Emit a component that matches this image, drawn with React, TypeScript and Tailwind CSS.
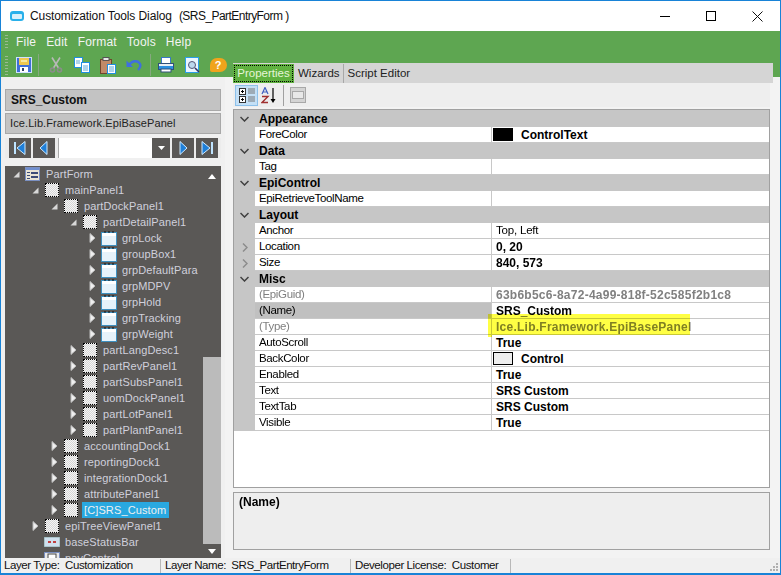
const font = "font-['Liberation_Sans',sans-serif]";

function TreeIcon({ kind }: { kind: string }) {
  if (kind === 'form')
    return (
      <svg width="16" height="15" viewBox="0 0 16 15" className="shrink-0">
        <rect x="0.5" y="0.5" width="14" height="13" fill="#e8e4d4" stroke="#7a8fc0" />
        <rect x="1" y="1" width="13" height="2" fill="#6f8fd0" />
        <path d="M2 5h3v1H2zM2 8h3v1H2zM2 11h3v1H2zM6 5h7v2H6zM6 9h7v2H6z" fill="#3c4c78" />
      </svg>
    );
  if (kind === 'group')
    return (
      <svg width="16" height="15" viewBox="0 0 16 15" className="shrink-0">
        <rect x="0.5" y="1.5" width="15" height="13" fill="#e6f2fa" stroke="#3d8fbf" />
        <path d="M1 2h14v3H1z" fill="#ffffff" />
        <path d="M3 1h2M7 1h2M11 1h2" stroke="#111" />
      </svg>
    );
  if (kind === 'bar')
    return (
      <svg width="16" height="10" viewBox="0 0 16 10" className="shrink-0">
        <rect x="0" y="0" width="16" height="10" fill="#cfe0ee" stroke="#8aa" />
        <rect x="4" y="4" width="3" height="2" fill="#c04040" />
        <rect x="9" y="4" width="3" height="2" fill="#c04040" />
      </svg>
    );
  if (kind === 'nav')
    return (
      <svg width="16" height="12" viewBox="0 0 16 12" className="shrink-0">
        <rect x="0.5" y="0.5" width="15" height="11" fill="#e8e8e8" stroke="#7a8fc0" />
        <rect x="4" y="2" width="8" height="6" fill="#fff" stroke="#444" />
      </svg>
    );
  return (
    <span className="h-[14px] w-[14px] shrink-0 border border-dotted border-black bg-[repeating-conic-gradient(#d8d8d8_0_25%,#f4f4f4_0_50%)] bg-[length:2px_2px]" />
  );
}

function Caret({ open }: { open: boolean }) {
  return open ? (
    <svg width="7" height="7" viewBox="0 0 7 7" className="shrink-0">
      <path d="M6.5 0.5V6.5H0.5Z" fill="#d8d8d8" />
    </svg>
  ) : (
    <svg width="7" height="10" viewBox="0 0 7 10" className="shrink-0">
      <path d="M1 0.5L6 5L1 9.5Z" fill="#f0f0f0" stroke="#bbb" />
    </svg>
  );
}

const tree: [string, number, string, boolean | null, boolean?][] = [
  ['PartForm', 0, 'form', true],
  ['mainPanel1', 1, 'panel', true],
  ['partDockPanel1', 2, 'panel', true],
  ['partDetailPanel1', 3, 'panel', true],
  ['grpLock', 4, 'group', false],
  ['groupBox1', 4, 'group', false],
  ['grpDefaultPara', 4, 'group', false],
  ['grpMDPV', 4, 'group', false],
  ['grpHold', 4, 'group', false],
  ['grpTracking', 4, 'group', false],
  ['grpWeight', 4, 'group', false],
  ['partLangDesc1', 3, 'panel', false],
  ['partRevPanel1', 3, 'panel', false],
  ['partSubsPanel1', 3, 'panel', false],
  ['uomDockPanel1', 3, 'panel', false],
  ['partLotPanel1', 3, 'panel', false],
  ['partPlantPanel1', 3, 'panel', false],
  ['accountingDock1', 2, 'panel', false],
  ['reportingDock1', 2, 'panel', false],
  ['integrationDock1', 2, 'panel', false],
  ['attributePanel1', 2, 'panel', false],
  ['[C]SRS_Custom', 2, 'panel', false, true],
  ['epiTreeViewPanel1', 1, 'panel', false],
  ['baseStatusBar', 1, 'bar', null],
  ['navControl', 1, 'nav', null],
];

const indent: Record<number, string> = { 0: 'pl-[8px]', 1: 'pl-[27px]', 2: 'pl-[46px]', 3: 'pl-[65px]', 4: 'pl-[84px]' };

function TreeRow({ row }: { row: (typeof tree)[number] }) {
  const [label, depth, kind, open, selected] = row;
  return (
    <div className={`flex h-[16px] shrink-0 items-center ${indent[depth]}`}>
      <span className="flex w-[12px] shrink-0 items-center">{open !== null && <Caret open={open} />}</span>
      <span className="flex w-[16px] shrink-0 items-center justify-center">
        <TreeIcon kind={kind} />
      </span>
      <span className={`ml-[3px] whitespace-nowrap pl-[2px] pr-[3px] text-[11px] leading-[16px] tracking-[0.12px] ${selected ? 'bg-[#29a8e0] text-[#f0f0f0]' : 'text-[#d0d0dc]'}`}>
        {label}
      </span>
    </div>
  );
}

function NavButton({ dir, bar }: { dir: 'l' | 'r'; bar?: boolean }) {
  return (
    <span className="flex h-[20px] w-[22px] items-center justify-center bg-[#5a5856]">
      <svg width="14" height="14" viewBox="0 0 14 14">
        {dir === 'l' ? (
          <>
            {bar && <rect x="1" y="1" width="2" height="12" fill="#bfe4ff" />}
            <path d={bar ? 'M12 0.5L4 7L12 13.5Z' : 'M10 0.5L3 7L10 13.5Z'} fill="#1f7fd8" stroke="#cfeaff" />
          </>
        ) : (
          <>
            {bar && <rect x="11" y="1" width="2" height="12" fill="#bfe4ff" />}
            <path d={bar ? 'M2 0.5L10 7L2 13.5Z' : 'M4 0.5L11 7L4 13.5Z'} fill="#1f7fd8" stroke="#cfeaff" />
          </>
        )}
      </svg>
    </span>
  );
}

function Grip({ h }: { h: string }) {
  return <span className={`w-[3px] ${h} shrink-0 bg-[repeating-linear-gradient(to_bottom,#9aba92_0_1px,transparent_1px_3px)]`} />;
}

function Tool({ children, w = 'w-[22px]' }: { children: React.ReactNode; w?: string }) {
  return <span className={`flex h-[20px] ${w} shrink-0 items-center justify-center`}>{children}</span>;
}

function ToolSep() {
  return <span className="mx-[3px] h-[22px] w-px shrink-0 bg-[#86a880]" />;
}

function Toolbar() {
  return (
    <div className="flex h-[24px] items-center pl-[4px]">
      <Grip h="h-[19px]" />
      <span className="w-[5px]" />
      <Tool>
        <svg width="16" height="16" viewBox="0 0 16 16">
          <rect x="0.5" y="0.5" width="15" height="15" fill="#3f6fd8" stroke="#cfe0ff" />
          <rect x="3" y="1" width="10" height="7" fill="#f0c850" />
          <rect x="5" y="3" width="6" height="2" fill="#f8e8a0" />
          <rect x="4" y="10" width="8" height="5" fill="#fff" />
          <rect x="6" y="11" width="2" height="3" fill="#30406a" />
        </svg>
      </Tool>
      <ToolSep />
      <span className="w-[3px]" />
      <Tool>
        <svg width="14" height="16" viewBox="0 0 14 16" fill="none" stroke="#b8b8b8" strokeWidth="1.6">
          <path d="M3 0.5L9.5 11M11 0.5L4.5 11" />
          <circle cx="3.5" cy="13" r="2" stroke="#8c8c8c" />
          <circle cx="10.5" cy="13" r="2" stroke="#8c8c8c" />
        </svg>
      </Tool>
      <span className="w-[4px]" />
      <Tool>
        <svg width="18" height="16" viewBox="0 0 18 16">
          <rect x="1.5" y="0.5" width="8" height="10" fill="#fff" stroke="#1f8fe0" />
          <rect x="8.5" y="5.5" width="8" height="10" fill="#fff" stroke="#1f8fe0" />
          <path d="M3 4h4M3 6h4M10 9h5M10 11h5M10 13h5" stroke="#5fa8d8" />
        </svg>
      </Tool>
      <span className="w-[4px]" />
      <Tool>
        <svg width="17" height="17" viewBox="0 0 17 17">
          <rect x="0.5" y="2.5" width="11" height="14" fill="#c08a68" stroke="#70452c" />
          <rect x="3" y="0.5" width="6" height="3" fill="#e8e8e8" stroke="#555" />
          <rect x="7.5" y="7.5" width="8" height="9" fill="#fff" stroke="#1f8fe0" />
          <path d="M9 10h5M9 12h5M9 14h5" stroke="#5fa8d8" />
        </svg>
      </Tool>
      <span className="w-[4px]" />
      <Tool>
        <svg width="16" height="12" viewBox="0 0 16 12" fill="none">
          <path d="M3 7C5 1 12 1 14 5C15 7 14 9 12 11" stroke="#3f6fe0" strokeWidth="2.4" />
          <path d="M0.5 1.5V8H7Z" fill="#3f6fe0" />
        </svg>
      </Tool>
      <span className="w-[2px]" />
      <ToolSep />
      <span className="w-[1px]" />
      <Tool>
        <svg width="16" height="16" viewBox="0 0 16 16">
          <rect x="3.5" y="0.5" width="9" height="6" fill="#fff" stroke="#3a78c8" />
          <rect x="0.5" y="6.5" width="15" height="6" fill="#e8eef4" stroke="#30507a" />
          <rect x="1" y="9" width="14" height="3" fill="#2a8fe0" />
          <rect x="3" y="12" width="10" height="3" fill="#fff" stroke="#30507a" />
        </svg>
      </Tool>
      <span className="w-[4px]" />
      <Tool>
        <svg width="15" height="17" viewBox="0 0 15 17">
          <rect x="0.5" y="0.5" width="13" height="15" fill="#eaf6ff" stroke="#2a9fe8" />
          <circle cx="7" cy="8" r="3.5" fill="#bcd8ee" stroke="#557" />
          <path d="M10 11L14 15" stroke="#336" strokeWidth="1.6" />
        </svg>
      </Tool>
      <span className="w-[4px]" />
      <Tool>
        <span className="flex h-[14px] w-[17px] items-center justify-center rounded-[7px] rounded-bl-[2px] bg-[#f0a41c] text-[11px] font-bold leading-none text-white">?</span>
      </Tool>
    </div>
  );
}

function Swatch({ light }: { light?: boolean }) {
  return <span className={`mr-[8px] h-[13px] w-[20px] shrink-0 border border-black ${light ? 'bg-[#eeeeee]' : 'bg-black'}`} />;
}

type Row = { k?: string; v?: string; cat?: string; first?: boolean; expand?: boolean; grey?: boolean; sel?: boolean; swatch?: 'dark' | 'light'; mark?: boolean; plain?: boolean };

const rows: Row[] = [
  { cat: 'Appearance', first: true },
  { k: 'ForeColor', v: 'ControlText', swatch: 'dark' },
  { cat: 'Data' },
  { k: 'Tag' },
  { cat: 'EpiControl' },
  { k: 'EpiRetrieveToolName' },
  { cat: 'Layout' },
  { k: 'Anchor', v: 'Top, Left', plain: true },
  { k: 'Location', v: '0, 20', expand: true },
  { k: 'Size', v: '840, 573', expand: true },
  { cat: 'Misc' },
  { k: '(EpiGuid)', v: '63b6b5c6-8a72-4a99-818f-52c585f2b1c8', grey: true },
  { k: '(Name)', v: 'SRS_Custom', sel: true },
  { k: '(Type)', v: 'Ice.Lib.Framework.EpiBasePanel', grey: true, mark: true },
  { k: 'AutoScroll', v: 'True' },
  { k: 'BackColor', v: 'Control', swatch: 'light' },
  { k: 'Enabled', v: 'True' },
  { k: 'Text', v: 'SRS Custom' },
  { k: 'TextTab', v: 'SRS Custom' },
  { k: 'Visible', v: 'True' },
];

function Chevron({ right }: { right?: boolean }) {
  return right ? (
    <svg width="6" height="9" viewBox="0 0 6 9" fill="none" stroke="#8c8c8c" strokeWidth="1.5">
      <path d="M1 0.5L5 4.5L1 8.5" />
    </svg>
  ) : (
    <svg width="9" height="6" viewBox="0 0 9 6" fill="none" stroke="#404040" strokeWidth="1.5">
      <path d="M0.5 1L4.5 5L8.5 1" />
    </svg>
  );
}

function GridRow({ r }: { r: Row }) {
  if (r.cat)
    return (
      <div className={`flex ${r.first ? 'h-[17px]' : 'h-[16px]'} items-center bg-[#c6c6c6]`}>
        <span className="flex w-[21px] justify-center">
          <Chevron />
        </span>
        <span className="pl-[4px] font-bold text-black">{r.cat}</span>
      </div>
    );
  const tone = r.grey ? 'text-[#808080]' : 'text-black';
  return (
    <div className="flex h-[16px] bg-[#c6c6c6]">
      <span className="flex w-[21px] shrink-0 items-center justify-center">{r.expand && <Chevron right />}</span>
      <span className={`flex w-[237px] shrink-0 items-center border-b border-r border-[#c8c8c8] pl-[4px] text-[11.5px] tracking-[-0.35px] ${r.sel ? 'bg-[#c0c0c0]' : 'bg-white'} ${tone}`}>
        {r.k}
      </span>
      <span className={`relative flex min-w-0 flex-1 items-center border-b border-[#c8c8c8] bg-white ${r.swatch ? 'pl-[1px]' : 'pl-[4px]'} ${r.plain ? 'text-[11.5px] tracking-[-0.2px]' : 'font-bold'} ${r.grey ? 'tracking-[0.25px]' : ''} ${tone}`}>
        {r.swatch && <Swatch light={r.swatch === 'light'} />}
        <span className="whitespace-nowrap">{r.v}</span>
        {r.mark && <span className="absolute -top-[5px] left-[-4px] h-[23px] w-[202px] bg-[#ffff44] mix-blend-multiply" />}
      </span>
    </div>
  );
}

export default function App() {
  return (
    <div className={`flex h-[575px] w-[781px] flex-col overflow-hidden border border-b-2 border-[#1883d7] bg-[#f3f3f3] text-[12px] ${font}`}>
      <header className="flex h-[30px] shrink-0 items-center bg-white pl-[9px]">
        <span className="flex h-[10px] w-[14px] items-center justify-center rounded-[3px] bg-[#29b0ea]">
          <span className="h-[5px] w-[10px] rounded-[1px] bg-[#d8f0fb]" />
        </span>
        <span className="ml-[6px] whitespace-nowrap text-[#111]">
          <span className="tracking-[-0.1px]">Customization Tools Dialog</span>
          <span className="ml-[7px] tracking-[-0.55px]">(SRS_PartEntryForm )</span>
        </span>
        <span className="ml-auto flex items-center">
          <span className="flex h-[30px] w-[46px] items-center justify-center">
            <span className="h-px w-[10px] bg-black" />
          </span>
          <span className="flex h-[30px] w-[46px] items-center justify-center">
            <span className="h-[10px] w-[10px] border border-black" />
          </span>
          <span className="flex h-[30px] w-[46px] items-center justify-center">
            <svg width="11" height="11" viewBox="0 0 11 11" stroke="#111" fill="none">
              <path d="M0.5 0.5L10.5 10.5M10.5 0.5L0.5 10.5" />
            </svg>
          </span>
        </span>
      </header>

      <div className="h-[46px] shrink-0 bg-[#5ea651]">
        <div className="flex h-[22px] items-center pl-[4px] text-[#f4f4f4]">
          <Grip h="h-[14px]" />
          <span className="ml-[8px] flex gap-[10px] tracking-[0.2px]">
            <span>File</span>
            <span>Edit</span>
            <span>Format</span>
            <span>Tools</span>
            <span>Help</span>
          </span>
        </div>
        <Toolbar />
      </div>

      <div className="flex min-h-0 flex-1">
        <aside className="flex h-full w-[224px] shrink-0 flex-col bg-[#f0f0f0] px-[4px] pt-[12px]">
          <div className="flex h-[22px] shrink-0 items-center border border-[#a8a8a8] bg-[#c3c3c3] pl-[5px] font-bold text-[#111]">SRS_Custom</div>
          <div className="mt-[2px] flex h-[21px] shrink-0 items-center border border-[#a8a8a8] bg-[#c3c3c3] pl-[4px] text-[11px] tracking-[0.1px] text-[#222]">Ice.Lib.Framework.EpiBasePanel</div>
          <div className="mt-[4px] flex h-[20px] shrink-0 items-center bg-[#ececec] pl-[4px]">
            <NavButton dir="l" bar />
            <span className="w-[2px]" />
            <NavButton dir="l" />
            <span className="ml-[3px] h-[20px] w-[94px] border-l border-[#aaa] bg-white" />
            <span className="flex h-[20px] w-[18px] items-center justify-center bg-[#5a5856]">
              <svg width="7" height="4" viewBox="0 0 7 4">
                <path d="M0 0H7L3.5 4Z" fill="#fff" />
              </svg>
            </span>
            <span className="w-[2px]" />
            <NavButton dir="r" />
            <span className="w-[2px]" />
            <NavButton dir="r" bar />
          </div>
          <div className="mt-[8px] flex min-h-0 flex-1 overflow-hidden bg-[#5a5856]">
            <div className="flex min-w-0 flex-1 flex-col">
              {tree.map((row) => (
                <TreeRow key={row[0]} row={row} />
              ))}
            </div>
            <div className="flex w-[18px] shrink-0 flex-col">
              <span className="flex h-[20px] shrink-0 items-center justify-center">
                <svg width="8" height="5" viewBox="0 0 8 5">
                  <path d="M0 5H8L4 0Z" fill="#fff" />
                </svg>
              </span>
              <span className="h-[171px] shrink-0" />
              <span className="h-[187px] shrink-0 bg-[#bbbbbb]" />
              <span className="flex h-[15px] shrink-0 items-center justify-center">
                <svg width="8" height="5" viewBox="0 0 8 5">
                  <path d="M0 0H8L4 5Z" fill="#fff" />
                </svg>
              </span>
            </div>
          </div>
        </aside>

        <main className="z-10 -mt-[14px] flex w-[548px] shrink-0 flex-col pl-[8px]">
          <div className="flex h-[20px] shrink-0 items-end bg-[#d5d5d5] text-[11.5px]">
            <span className="flex h-[19px] w-[61px] items-center justify-center bg-[#5fb13f] p-[1px] text-[#e6f5d8]">
              <span className="flex h-full w-full items-center justify-center border border-dotted border-black">Properties</span>
            </span>
            <span className="flex h-[19px] items-center border-r border-[#a8a8a8] pl-[4px] pr-[3px] text-[#222]">Wizards</span>
            <span className="flex h-[19px] items-center pl-[4px] text-[#222]">Script Editor</span>
          </div>
          <div className="mr-[3px] flex h-[24px] shrink-0 items-center bg-[#eeeeee] pl-[2px]">
            <span className="flex h-[21px] w-[23px] items-center justify-center border border-[#8cc0ea] bg-[#c4e0f6]">
              <svg width="16" height="15" viewBox="0 0 16 15">
                <rect x="0.5" y="0.5" width="6" height="6" fill="#fff" stroke="#333" />
                <rect x="0.5" y="8.5" width="6" height="6" fill="#fff" stroke="#333" />
                <path d="M2 3.5h3M3.5 2v3M2 11.5h3M3.5 10v3" stroke="#000" />
                <path d="M9 1h7M9 3h7M9 5h7M9 9h7M9 11h7M9 13h7" stroke="#777" />
              </svg>
            </span>
            <span className="ml-[3px] flex h-[21px] w-[16px] flex-col items-start justify-center">
              <svg width="16" height="17" viewBox="0 0 16 17">
                <path d="M1 7L4 0.5L7 7M2 5h4" fill="none" stroke="#4060c0" strokeWidth="1.2" />
                <path d="M1 9.5h6L1 15.5h6" fill="none" stroke="#a03030" strokeWidth="1.4" />
                <path d="M12 1v13" stroke="#000" strokeWidth="1.2" />
                <path d="M9.5 12h5L12 16Z" fill="#000" />
              </svg>
            </span>
            <span className="ml-[6px] h-[21px] w-px bg-[#a0a0a0]" />
            <span className="ml-[6px] flex h-[16px] w-[16px] items-center justify-center border border-[#a8a8a8] bg-[#d4d4d4]">
              <span className="h-[8px] w-[12px] border border-[#a8a8a8] bg-[#e8e8e8]" />
            </span>
          </div>
          <div className="mr-[3px] mt-[2px] h-[379px] shrink-0 border border-[#a0a0a0] bg-white">
            {rows.map((r, i) => (
              <GridRow key={i} r={r} />
            ))}
          </div>
          <div className="mr-[3px] mt-[4px] h-[58px] shrink-0 border border-[#a0a0a0] bg-[#eeeeee] pl-[5px] font-bold leading-[18px] text-black">(Name)</div>
        </main>
      </div>

      <footer className="flex h-[15px] shrink-0 items-center whitespace-nowrap bg-[#f0f0f0] pt-[1px] text-[11.5px] text-[#111]">
        <span className="flex h-full w-[160px] items-center border-r border-[#b8b8b8] pl-[3px] tracking-[-0.4px]">Layer Type:&nbsp; Customization</span>
        <span className="flex h-full w-[190px] items-center border-r border-[#b8b8b8] pl-[4px] tracking-[-0.45px]">Layer Name:&nbsp; SRS_PartEntryForm</span>
        <span className="flex h-full w-[160px] items-center border-r border-[#b8b8b8] pl-[4px] tracking-[-0.4px]">Developer License:&nbsp; Customer</span>
        <span className="ml-auto mr-[1px] flex items-end self-end pb-[1px]">
          <svg width="10" height="10" viewBox="0 0 10 10" fill="#b0b0b0">
            <path d="M7 1h2v2H7zM4 4h2v2H4zM7 4h2v2H7zM1 7h2v2H1zM4 7h2v2H4zM7 7h2v2H7z" />
          </svg>
        </span>
      </footer>
    </div>
  );
}
